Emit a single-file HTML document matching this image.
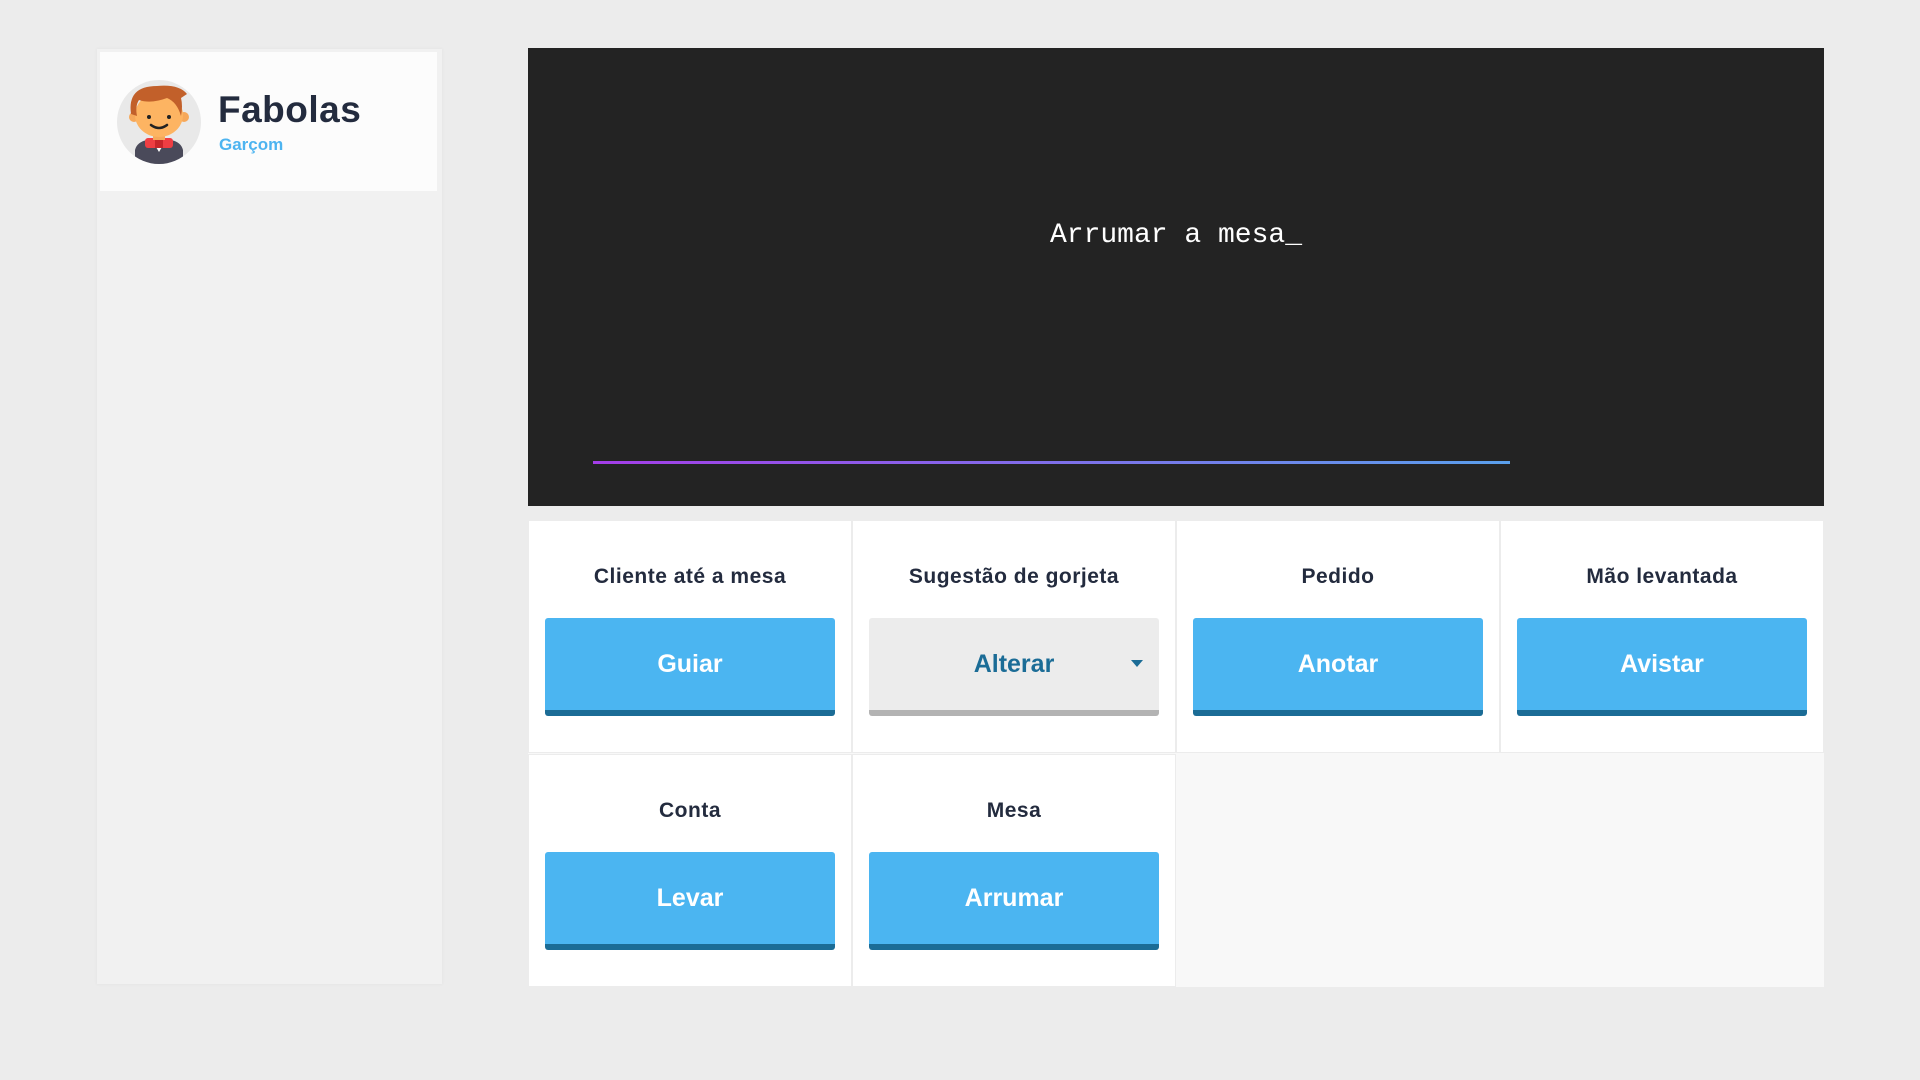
<!DOCTYPE html>
<html><head><meta charset="utf-8"><style>
*{box-sizing:border-box;margin:0;padding:0}
body{width:1920px;height:1080px;background:#ececec;font-family:"Liberation Sans",sans-serif;position:relative;overflow:hidden}
.side{position:absolute;left:97px;top:49px;width:345px;height:935px;background:#f1f1f1;box-shadow:0 0 4px rgba(0,0,0,.05)}
.card{position:absolute;left:100px;top:52px;width:337px;height:139px;background:#fcfcfc}
.av{position:absolute;left:117px;top:80px;width:84px;height:84px;border-radius:50%;background:#e9e9e9;overflow:hidden}
.name{position:absolute;left:218px;top:89px;font-size:37px;font-weight:bold;color:#232b3e;letter-spacing:.5px}
.role{position:absolute;left:219px;top:135px;font-size:17px;font-weight:bold;color:#4db4f0}
.term{position:absolute;left:528px;top:48px;width:1296px;height:458px;background:#232323}
.term .t{position:absolute;left:0;width:100%;top:172px;text-align:center;color:#fff;font-family:"Liberation Mono",monospace;font-size:28px}
.term .l{position:absolute;left:65px;top:413px;width:917px;height:3px;background:linear-gradient(90deg,#a43de8,#5aa0ec)}
.grid{position:absolute;left:528px;top:520px;width:1296px;height:467px;background:#f8f8f8}
.cell{position:absolute;width:324px;height:233px;background:#fff;border:1px solid #ececec}
.cell .lb{position:absolute;top:44px;width:100%;text-align:center;font-size:21px;font-weight:bold;color:#232b3e;letter-spacing:.5px}
.btn{position:absolute;left:16px;top:97px;width:290px;height:98px;background:#4bb5f1;border-bottom:6px solid #1b6c96;border-radius:3px;color:#fff;font-size:25px;font-weight:bold;text-align:center;line-height:92px}
.btn.g{background:#ececec;border-bottom-color:#b3b3b3;color:#1b6c96}
.btn.g:after{content:"";position:absolute;right:16px;top:42px;border-left:6px solid transparent;border-right:6px solid transparent;border-top:7px solid #1b6c96}
</style></head><body>
<div class="side"></div>
<div class="card"></div>
<div class="av"><svg width="84" height="84" viewBox="0 0 84 84">
<path d="M18 84 V70 Q20 62 30 60 H54 Q64 62 66 70 V84Z" fill="#4a4a5a"/>
<path d="M36 62 L42 72 L48 62Z" fill="#fff"/>
<rect x="28" y="58" width="28" height="10" rx="3" fill="#ef3e43"/><rect x="38" y="58" width="8" height="10" fill="#c8262b"/>
<rect x="36" y="50" width="12" height="10" fill="#f6a85a"/>
<circle cx="17" cy="37" r="5" fill="#f6a85a"/><circle cx="67" cy="37" r="5" fill="#f6a85a"/>
<ellipse cx="42" cy="35" rx="24" ry="22" fill="#fdb462"/>
<path d="M14 34 Q10 6 40 6 Q62 4 70 14 L64 18 Q66 26 64 36 Q60 22 50 18 Q34 24 22 20 Q18 26 20 36Z" fill="#c2602a"/>
<circle cx="32" cy="37" r="2" fill="#222"/><circle cx="52" cy="37" r="2" fill="#222"/>
<path d="M34 45 Q42 51 50 45" stroke="#222" stroke-width="2.5" fill="none" stroke-linecap="round"/>
</svg></div>
<div class="name">Fabolas</div>
<div class="role">Garçom</div>
<div class="term"><div class="t">Arrumar a mesa_</div><div class="l"></div></div>
<div class="grid">
<div class="cell" style="left:0;top:0"><div class="lb">Cliente até a mesa</div><div class="btn">Guiar</div></div>
<div class="cell" style="left:324px;top:0"><div class="lb">Sugestão de gorjeta</div><div class="btn g">Alterar</div></div>
<div class="cell" style="left:648px;top:0"><div class="lb">Pedido</div><div class="btn">Anotar</div></div>
<div class="cell" style="left:972px;top:0"><div class="lb">Mão levantada</div><div class="btn">Avistar</div></div>
<div class="cell" style="left:0;top:234px"><div class="lb">Conta</div><div class="btn">Levar</div></div>
<div class="cell" style="left:324px;top:234px"><div class="lb">Mesa</div><div class="btn">Arrumar</div></div>
</div>
</body></html>
